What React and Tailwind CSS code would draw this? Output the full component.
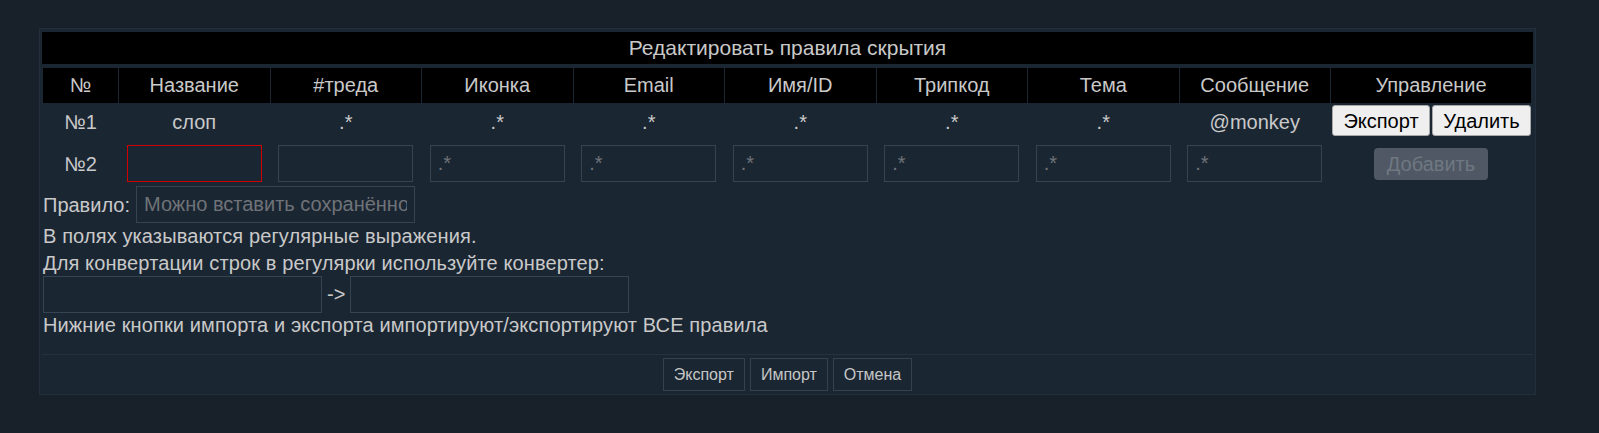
export default function App() {
  const cols = ['№', 'Название', '#треда', 'Иконка', 'Email', 'Имя/ID', 'Трипкод', 'Тема', 'Сообщение', 'Управление'];
  const row1 = ['№1', 'слоп', '.*', '.*', '.*', '.*', '.*', '.*', '@monkey'];
  const grid = 'grid grid-cols-[75px_repeat(8,minmax(0,1fr))_200px] gap-x-px w-[1488px] ml-[1px]';
  const input =
    'h-[37px] border border-[#364352] bg-transparent px-[7px] text-[20px] text-[#c8c8c8] outline-none placeholder:text-[#6f7378]';

  return (
    <div className="min-h-screen bg-[#18202a] pt-[28px] font-['Liberation_Sans',Arial,sans-serif] text-[20px] text-[#c9c9c9]">
      <div className="ml-[39px] w-[1497px] border border-[#222e3b] bg-[#1b2633] px-[2px] pt-[3px]">
        <div className="h-[32px] bg-black text-center text-[21px] leading-[32px]">Редактировать правила скрытия</div>

        <div className={`${grid} mt-[4px]`}>
          {cols.map((c) => (
            <div key={c} className="h-[35px] bg-black text-center leading-[35px]">
              {c}
            </div>
          ))}
        </div>

        <div className={`${grid} mt-px h-[33px] items-center`}>
          {row1.map((v, i) => (
            <div key={i} className="text-center pt-[2px]">
              {v}
            </div>
          ))}
          <div className="flex justify-end gap-[2px]">
            <button className="h-[31px] w-[98px] rounded-[3px] border border-[#a8a8a8] bg-[#efefef] text-[20px] text-black">
              Экспорт
            </button>
            <button className="h-[31px] w-[99px] rounded-[3px] border border-[#a8a8a8] bg-[#efefef] text-[20px] text-black">
              Удалить
            </button>
          </div>
        </div>

        <div className={`${grid} mt-[8px] h-[37px] items-center`}>
          <div className="text-center">№2</div>
          <div className="flex justify-center">
            <input className={`${input} w-[135px] border-[#d00000]`} />
          </div>
          <div className="flex justify-center">
            <input className={`${input} w-[135px]`} />
          </div>
          {[0, 1, 2, 3, 4, 5].map((i) => (
            <div key={i} className="flex justify-center">
              <input className={`${input} w-[135px]`} placeholder=".*" />
            </div>
          ))}
          <div className="flex justify-center">
            <button className="h-[32px] w-[114px] rounded-[4px] bg-[#4f5864] text-[20px] text-[#6f7882]">Добавить</button>
          </div>
        </div>

        <div className="ml-[1px] mt-[4px] flex items-center gap-[6px]">
          <span>Правило:</span>
          <input className={`${input} h-[36px] w-[279px]`} placeholder="Можно вставить сохранённое правило" />
        </div>
        <div className="ml-[1px] leading-[27px] tracking-[0.12px]">
          <div>В полях указываются регулярные выражения.</div>
          <div>Для конвертации строк в регулярки используйте конвертер:</div>
          <div className="-mt-px flex items-center">
            <input className={`${input} h-[36px] w-[279px]`} />
            <span className="px-[5px] tracking-normal">-&gt;</span>
            <input className={`${input} h-[36px] w-[279px]`} />
          </div>
          <div className="-mt-px">Нижние кнопки импорта и экспорта импортируют/экспортируют ВСЕ правила</div>
        </div>

        <div className="mt-[15px] flex justify-center gap-[5px] border-t border-[#243140] pb-[3px] pt-[3px]">
          {['Экспорт', 'Импорт', 'Отмена'].map((b) => (
            <button
              key={b}
              className="h-[33px] border border-[#34424f] bg-transparent px-[10px] text-[16px] text-[#c6c6c6]"
            >
              {b}
            </button>
          ))}
        </div>
      </div>
    </div>
  );
}
